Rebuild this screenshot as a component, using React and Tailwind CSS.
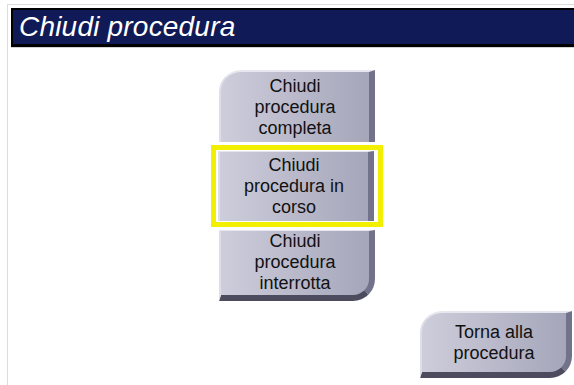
import React from 'react';

const face = "flex items-center justify-center text-center text-[18px] leading-[21px] text-[#111] bg-gradient-to-r from-[#cdcddb] to-[#a6a6bb] border-l-2 border-l-[#dedee8] border-r-[6px] border-r-[#72728a]";

const App = () => {
    return (
        <div className="w-[574px] h-[385px] overflow-hidden bg-white" style={{ fontFamily: '"Liberation Sans", Arial, sans-serif' }}>
            {/* Frame */}
            <div className="ml-[7px] mt-[4px] w-[600px] h-[400px] border-l border-t border-[#dcdcdc] pl-[3px] pt-[3px]">
                {/* Title bar */}
                <div className="h-[39px] border-2 border-b-[3px] border-black bg-[#101a56] flex items-center pl-[6px]">
                    <h1 className="text-[28px] leading-none italic text-white tracking-[0.2px]">Chiudi procedura</h1>
                </div>
                <div className="h-px w-full bg-[#d4d4d4]"></div>

                {/* Options */}
                <div className="flex flex-col pl-[208px] pt-[22px]">
                    <button className={`${face} w-[156px] h-[72px] rounded-tl-[22px] border-t-2 border-t-[#e6e6ee]`}>
                        Chiudi<br />procedura<br />completa
                    </button>
                    <div className="mt-[3px] -ml-[8px] w-[172px] border-[5px] border-[#f2ef00] p-[1px] pl-[2px]">
                        <button className={`${face} w-[156px] h-[70px] border-t border-t-[#e6e6ee]`}>
                            Chiudi<br />procedura in<br />corso
                        </button>
                    </div>
                    <button className={`${face} mt-[3px] w-[156px] h-[71px] rounded-br-[22px] border-t border-t-[#e6e6ee] border-b-[6px] border-b-[#4c4c5e] border-r-[#5c5c70] pb-[2px]`}>
                        Chiudi<br />procedura<br />interrotta
                    </button>
                    <button className={`${face} mt-[10px] ml-[201px] w-[152px] h-[67px] rounded-tl-[22px] rounded-br-[22px] border-t-2 border-t-[#e6e6ee] border-b-[6px] border-b-[#4c4c5e] border-r-[#5c5c70]`}>
                        Torna alla<br />procedura
                    </button>
                </div>
            </div>
        </div>
    );
};

export default App;
